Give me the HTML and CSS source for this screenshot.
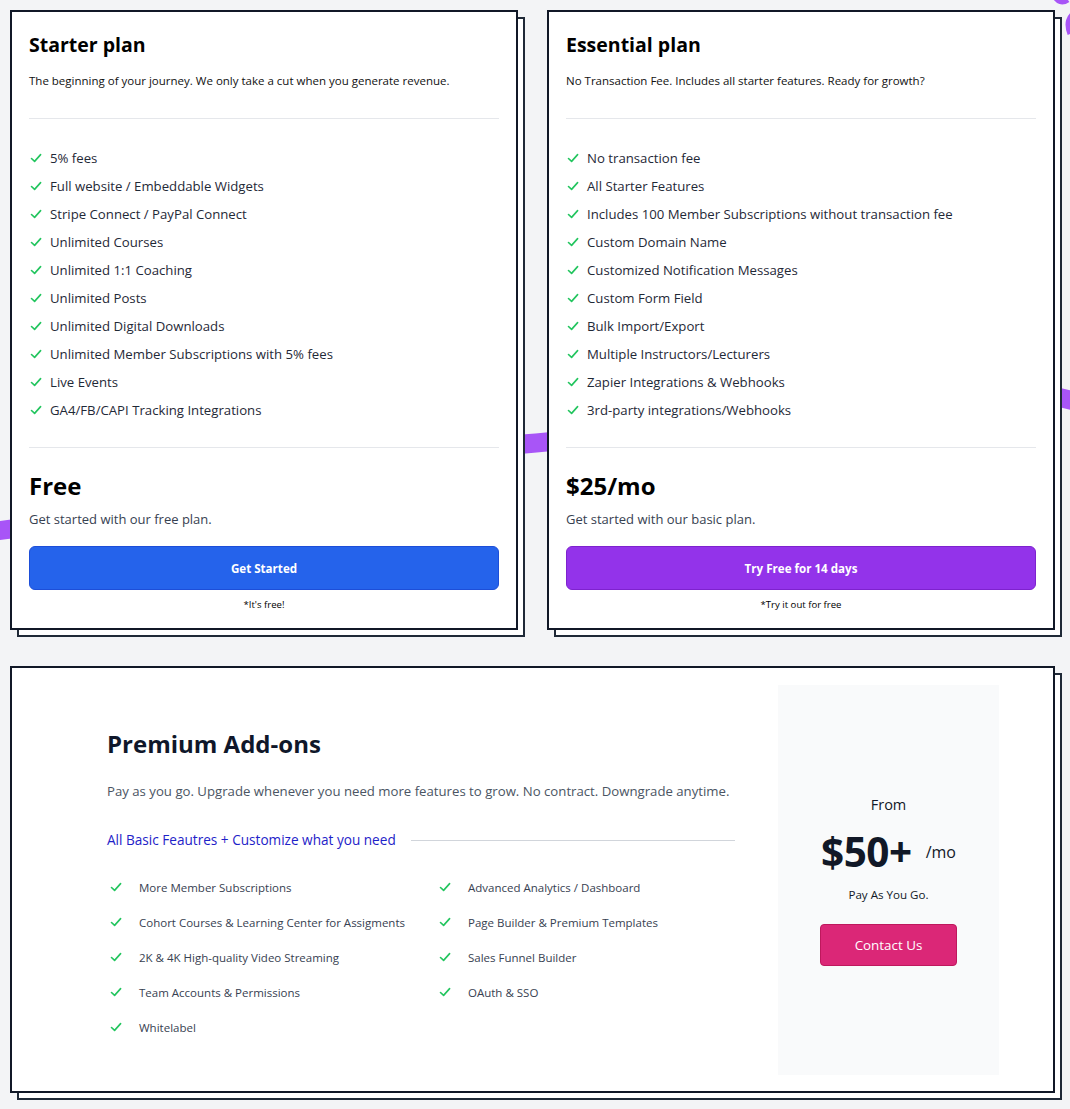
FILE: index.html
```html
<!DOCTYPE html>
<html lang="en">
<head>
<meta charset="utf-8">
<title>Pricing</title>
<link rel="stylesheet" href="styles.css">
</head>
<body>
<svg class="ribbon" width="1070" height="1109" viewBox="0 0 1070 1109" aria-hidden="true">
  <path d="M-30 534 C 150 515, 380 455, 536 443 C 700 428, 900 350, 1085 404" fill="none" stroke="#a855f7" stroke-width="19"/>
  <path d="M1054 -4 C 1058 2, 1062 4, 1068 0 M1076 12 C 1068 16, 1066 24, 1070 34" fill="none" stroke="#a855f7" stroke-width="5"/>
</svg>
<main class="page">
  <section class="plans">
    <article class="card">
      <h2 class="card-title">Starter plan</h2>
      <p class="card-desc">The beginning of your journey. We only take a cut when you generate revenue.</p>
      <hr class="rule rule-top">
      <ul class="features">
        <li><svg class="check" viewBox="0 0 14 14"><path d="M2.5 7.5 5.6 10.4 11.6 3.6"/></svg><span>5% fees</span></li>
        <li><svg class="check" viewBox="0 0 14 14"><path d="M2.5 7.5 5.6 10.4 11.6 3.6"/></svg><span>Full website / Embeddable Widgets</span></li>
        <li><svg class="check" viewBox="0 0 14 14"><path d="M2.5 7.5 5.6 10.4 11.6 3.6"/></svg><span>Stripe Connect / PayPal Connect</span></li>
        <li><svg class="check" viewBox="0 0 14 14"><path d="M2.5 7.5 5.6 10.4 11.6 3.6"/></svg><span>Unlimited Courses</span></li>
        <li><svg class="check" viewBox="0 0 14 14"><path d="M2.5 7.5 5.6 10.4 11.6 3.6"/></svg><span>Unlimited 1:1 Coaching</span></li>
        <li><svg class="check" viewBox="0 0 14 14"><path d="M2.5 7.5 5.6 10.4 11.6 3.6"/></svg><span>Unlimited Posts</span></li>
        <li><svg class="check" viewBox="0 0 14 14"><path d="M2.5 7.5 5.6 10.4 11.6 3.6"/></svg><span>Unlimited Digital Downloads</span></li>
        <li><svg class="check" viewBox="0 0 14 14"><path d="M2.5 7.5 5.6 10.4 11.6 3.6"/></svg><span>Unlimited Member Subscriptions with 5% fees</span></li>
        <li><svg class="check" viewBox="0 0 14 14"><path d="M2.5 7.5 5.6 10.4 11.6 3.6"/></svg><span>Live Events</span></li>
        <li><svg class="check" viewBox="0 0 14 14"><path d="M2.5 7.5 5.6 10.4 11.6 3.6"/></svg><span>GA4/FB/CAPI Tracking Integrations</span></li>
      </ul>
      <hr class="rule rule-bottom">
      <div class="price">Free</div>
      <p class="price-note">Get started with our free plan.</p>
      <a class="btn btn-blue" href="#">Get Started</a>
      <p class="fine">*It's free!</p>
    </article>
    <article class="card">
      <h2 class="card-title">Essential plan</h2>
      <p class="card-desc">No Transaction Fee. Includes all starter features. Ready for growth?</p>
      <hr class="rule rule-top">
      <ul class="features">
        <li><svg class="check" viewBox="0 0 14 14"><path d="M2.5 7.5 5.6 10.4 11.6 3.6"/></svg><span>No transaction fee</span></li>
        <li><svg class="check" viewBox="0 0 14 14"><path d="M2.5 7.5 5.6 10.4 11.6 3.6"/></svg><span>All Starter Features</span></li>
        <li><svg class="check" viewBox="0 0 14 14"><path d="M2.5 7.5 5.6 10.4 11.6 3.6"/></svg><span>Includes 100 Member Subscriptions without transaction fee</span></li>
        <li><svg class="check" viewBox="0 0 14 14"><path d="M2.5 7.5 5.6 10.4 11.6 3.6"/></svg><span>Custom Domain Name</span></li>
        <li><svg class="check" viewBox="0 0 14 14"><path d="M2.5 7.5 5.6 10.4 11.6 3.6"/></svg><span>Customized Notification Messages</span></li>
        <li><svg class="check" viewBox="0 0 14 14"><path d="M2.5 7.5 5.6 10.4 11.6 3.6"/></svg><span>Custom Form Field</span></li>
        <li><svg class="check" viewBox="0 0 14 14"><path d="M2.5 7.5 5.6 10.4 11.6 3.6"/></svg><span>Bulk Import/Export</span></li>
        <li><svg class="check" viewBox="0 0 14 14"><path d="M2.5 7.5 5.6 10.4 11.6 3.6"/></svg><span>Multiple Instructors/Lecturers</span></li>
        <li><svg class="check" viewBox="0 0 14 14"><path d="M2.5 7.5 5.6 10.4 11.6 3.6"/></svg><span>Zapier Integrations &amp; Webhooks</span></li>
        <li><svg class="check" viewBox="0 0 14 14"><path d="M2.5 7.5 5.6 10.4 11.6 3.6"/></svg><span>3rd-party integrations/Webhooks</span></li>
      </ul>
      <hr class="rule rule-bottom">
      <div class="price">$25/mo</div>
      <p class="price-note">Get started with our basic plan.</p>
      <a class="btn btn-purple" href="#">Try Free for 14 days</a>
      <p class="fine">*Try it out for free</p>
    </article>
  </section>

  <section class="addons">
    <div class="addons-main">
      <h2 class="addons-title">Premium Add-ons</h2>
      <p class="addons-desc">Pay as you go. Upgrade whenever you need more features to grow. No contract. Downgrade anytime.</p>
      <div class="addons-sub"><span>All Basic Feautres + Customize what you need</span></div>
      <ul class="addons-list">
        <li><svg class="check" viewBox="0 0 14 14"><path d="M2.5 7.5 5.6 10.4 11.6 3.6"/></svg><span>More Member Subscriptions</span></li>
        <li><svg class="check" viewBox="0 0 14 14"><path d="M2.5 7.5 5.6 10.4 11.6 3.6"/></svg><span>Advanced Analytics / Dashboard</span></li>
        <li><svg class="check" viewBox="0 0 14 14"><path d="M2.5 7.5 5.6 10.4 11.6 3.6"/></svg><span>Cohort Courses &amp; Learning Center for Assigments</span></li>
        <li><svg class="check" viewBox="0 0 14 14"><path d="M2.5 7.5 5.6 10.4 11.6 3.6"/></svg><span>Page Builder &amp; Premium Templates</span></li>
        <li><svg class="check" viewBox="0 0 14 14"><path d="M2.5 7.5 5.6 10.4 11.6 3.6"/></svg><span>2K &amp; 4K High-quality Video Streaming</span></li>
        <li><svg class="check" viewBox="0 0 14 14"><path d="M2.5 7.5 5.6 10.4 11.6 3.6"/></svg><span>Sales Funnel Builder</span></li>
        <li><svg class="check" viewBox="0 0 14 14"><path d="M2.5 7.5 5.6 10.4 11.6 3.6"/></svg><span>Team Accounts &amp; Permissions</span></li>
        <li><svg class="check" viewBox="0 0 14 14"><path d="M2.5 7.5 5.6 10.4 11.6 3.6"/></svg><span>OAuth &amp; SSO</span></li>
        <li><svg class="check" viewBox="0 0 14 14"><path d="M2.5 7.5 5.6 10.4 11.6 3.6"/></svg><span>Whitelabel</span></li>
      </ul>
    </div>
    <aside class="addons-panel">
      <p class="from">From</p>
      <div class="big-price"><span class="amount">$50+</span><span class="per">/mo</span></div>
      <p class="payg">Pay As You Go.</p>
      <a class="btn-contact" href="#">Contact Us</a>
    </aside>
  </section>
</main>
</body>
</html>
```

FILE: styles.css
```css
html {
  overflow: hidden;
}

body {
  margin: 0;
  background: #f3f4f6;
  font-family: "Open Sans", "Noto Sans", sans-serif;
  color: #1f2937;
}

.ribbon {
  position: absolute;
  top: 0;
  left: 0;
  z-index: -1;
}

.page {
  padding: 10px 15px 9px 10px;
  width: 1045px;
}

.plans {
  display: grid;
  grid-template-columns: 508px 508px;
  column-gap: 29px;
}

.card {
  background: #fff;
  border: 2px solid #111827;
  padding: 19px 17px 16px 17px;
  box-shadow: 7px 7px 0 -2px #fff, 7px 7px 0 0 #1f2937;
}

.card-title {
  margin: 0;
  font-size: 19.5px;
  line-height: 28px;
  font-weight: 700;
  color: #000;
}

.card-desc {
  margin: 14px 0 0;
  font-size: 11.5px;
  line-height: 16px;
  color: #111;
}

.rule {
  border: 0;
  height: 1px;
  background: #e5e7eb;
  margin: 0;
}

.rule-top {
  margin-top: 29px;
}

.features {
  list-style: none;
  margin: 25px 0 0;
  padding: 0;
}

.features li {
  display: flex;
  align-items: center;
  height: 28px;
  gap: 7px;
  font-size: 13.2px;
  color: #1f2937;
}

.check {
  width: 14px;
  height: 14px;
  flex: none;
}

.check path {
  fill: none;
  stroke: #22c55e;
  stroke-width: 1.6;
  stroke-linecap: round;
  stroke-linejoin: round;
}

.rule-bottom {
  margin-top: 23px;
}

.price {
  margin-top: 22px;
  font-size: 24px;
  line-height: 32px;
  font-weight: 700;
  color: #000;
}

.price-note {
  margin: 7px 0 0;
  font-size: 13px;
  line-height: 20px;
  color: #374151;
}

.btn {
  display: block;
  margin-top: 17px;
  height: 44px;
  box-sizing: border-box;
  line-height: 43px;
  border-radius: 6px;
  text-align: center;
  font-size: 11.6px;
  font-weight: 700;
  color: #fff;
  text-decoration: none;
}

.btn-blue {
  background: #2563eb;
  border: 1px solid #1d4ed8;
}

.btn-purple {
  background: #9333ea;
  border: 1px solid #7e22ce;
}

.fine {
  margin: 8px 0 0;
  font-size: 9.6px;
  line-height: 14px;
  text-align: center;
  color: #000;
}

.addons {
  margin-top: 36px;
  display: flex;
  background: #fff;
  border: 2px solid #111827;
  padding: 17px 54px 16px 95px;
  box-shadow: 7px 7px 0 -2px #fff, 7px 7px 0 0 #1f2937;
}

.addons-main {
  flex: 1;
  margin-right: 43px;
  padding-top: 43px;
}

.addons-title {
  margin: 0;
  font-size: 24px;
  line-height: 32px;
  font-weight: 700;
  color: #0f172a;
}

.addons-desc {
  margin: 21px 0 0;
  font-size: 13.2px;
  line-height: 20px;
  color: #4b5563;
}

.addons-sub {
  margin-top: 29px;
  display: flex;
  align-items: center;
  font-size: 13.6px;
  line-height: 20px;
  color: #1e22c8;
}

.addons-sub::after {
  content: "";
  flex: 1;
  height: 1px;
  background: #d1d5db;
  margin-left: 15px;
}

.addons-list {
  list-style: none;
  margin: 27px 0 0;
  padding: 0;
  display: grid;
  grid-template-columns: 329px 1fr;
  row-gap: 15px;
}

.addons-list li {
  display: flex;
  align-items: center;
  height: 20px;
  gap: 16px;
  padding-left: 2px;
  font-size: 11.5px;
  color: #374151;
}

.addons-panel {
  width: 221px;
  min-height: 390px;
  background: #f9fafb;
  display: flex;
  flex-direction: column;
  align-items: center;
  justify-content: center;
}

.from {
  margin: 0;
  font-size: 14.5px;
  line-height: 22px;
  color: #111827;
}

.big-price {
  margin-top: 12px;
  display: flex;
  align-items: center;
  gap: 14px;
  height: 48px;
}

.amount {
  font-size: 40.5px;
  font-weight: 700;
  line-height: 48px;
  color: #111827;
  letter-spacing: -0.5px;
}

.per {
  font-size: 16px;
  color: #111827;
}

.payg {
  margin: 10px 0 0;
  font-size: 11.6px;
  line-height: 18px;
  color: #111827;
}

.btn-contact {
  display: block;
  margin-top: 20px;
  width: 137px;
  height: 42px;
  box-sizing: border-box;
  line-height: 40px;
  background: #db2777;
  border: 1px solid #be185d;
  border-radius: 4px;
  text-align: center;
  font-size: 13.4px;
  color: #fff;
  text-decoration: none;
}
```
